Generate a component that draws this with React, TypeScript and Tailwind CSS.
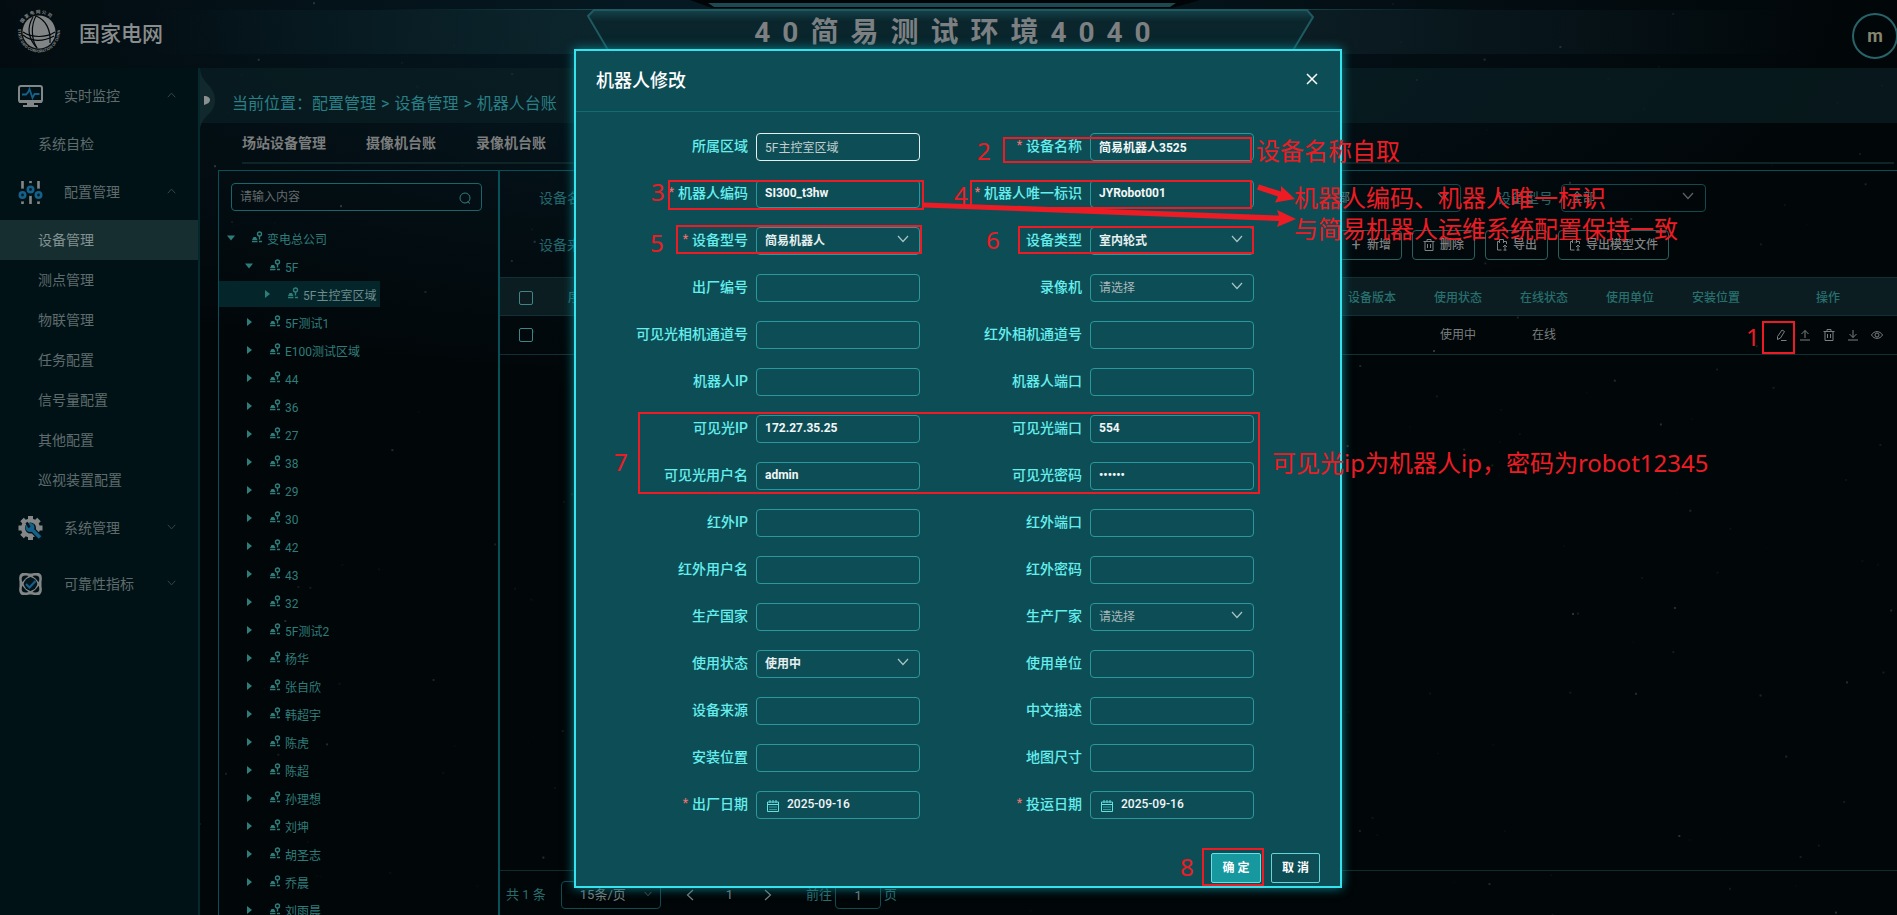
import type { ReactNode } from 'react'

const NAV = [
  { label: '实时监控', icon: 'monitor', open: true, items: ['系统自检'] },
  {
    label: '配置管理',
    icon: 'sliders',
    open: true,
    items: ['设备管理', '测点管理', '物联管理', '任务配置', '信号量配置', '其他配置', '巡视装置配置'],
  },
  { label: '系统管理', icon: 'gear', open: false, items: [] },
  { label: '可靠性指标', icon: 'shield', open: false, items: [] },
]

const ACTIVE_ITEM = '设备管理'

const TREE_LEAVES = [
  '5F测试1', 'E100测试区域', '44', '36', '27', '38', '29', '30', '42', '43', '32', '5F测试2',
  '杨华', '张自欣', '韩超宇', '陈虎', '陈超', '孙理想', '刘坤', '胡圣志', '乔晨', '刘雨晨',
]

interface Field {
  id: string
  label: string
  value?: string
  kind?: 'text' | 'select' | 'date' | 'password'
  required?: boolean
  readOnly?: boolean
}

const FIELDS: Field[] = [
  { id: 'area', label: '所属区域', value: '5F主控室区域', readOnly: true },
  { id: 'name', label: '设备名称', value: '简易机器人3525', required: true },
  { id: 'code', label: '机器人编码', value: 'SI300_t3hw', required: true },
  { id: 'uid', label: '机器人唯一标识', value: 'JYRobot001', required: true },
  { id: 'model', label: '设备型号', value: '简易机器人', kind: 'select', required: true },
  { id: 'type', label: '设备类型', value: '室内轮式', kind: 'select' },
  { id: 'serial', label: '出厂编号' },
  { id: 'recorder', label: '录像机', kind: 'select' },
  { id: 'visChannel', label: '可见光相机通道号' },
  { id: 'irChannel', label: '红外相机通道号' },
  { id: 'robotIp', label: '机器人IP' },
  { id: 'robotPort', label: '机器人端口' },
  { id: 'visIp', label: '可见光IP', value: '172.27.35.25' },
  { id: 'visPort', label: '可见光端口', value: '554' },
  { id: 'visUser', label: '可见光用户名', value: 'admin' },
  { id: 'visPass', label: '可见光密码', value: '123456', kind: 'password' },
  { id: 'irIp', label: '红外IP' },
  { id: 'irPort', label: '红外端口' },
  { id: 'irUser', label: '红外用户名' },
  { id: 'irPass', label: '红外密码' },
  { id: 'country', label: '生产国家' },
  { id: 'vendor', label: '生产厂家', kind: 'select' },
  { id: 'status', label: '使用状态', value: '使用中', kind: 'select' },
  { id: 'unit', label: '使用单位' },
  { id: 'source', label: '设备来源' },
  { id: 'desc', label: '中文描述' },
  { id: 'place', label: '安装位置' },
  { id: 'mapSize', label: '地图尺寸' },
  { id: 'madeAt', label: '出厂日期', value: '2025-09-16', kind: 'date', required: true },
  { id: 'usedAt', label: '投运日期', value: '2025-09-16', kind: 'date', required: true },
]

const MARK_BOXES = [
  'left-[1762px] top-[321px] w-[33px] h-[33px]',
  'left-[1003px] top-[137px] w-[249px] h-[26px]',
  'left-[668px] top-[180px] w-[256px] h-[30px]',
  'left-[970px] top-[180px] w-[282px] h-[29px]',
  'left-[676px] top-[225px] w-[246px] h-[29px]',
  'left-[1018px] top-[226px] w-[236px] h-[28px]',
  'left-[638px] top-[412px] w-[622px] h-[82px]',
  'left-[1202px] top-[848px] w-[62px] h-[38px]',
]

const MARK_TEXTS = [
  { text: '1', pos: 'left-[1746px] top-[321px]' },
  { text: '2', pos: 'left-[977px] top-[135px]' },
  { text: '3', pos: 'left-[651px] top-[176px]' },
  { text: '4', pos: 'left-[954px] top-[179px]' },
  { text: '5', pos: 'left-[650px] top-[227px]' },
  { text: '6', pos: 'left-[986px] top-[224px]' },
  { text: '7', pos: 'left-[614px] top-[446px]' },
  { text: '8', pos: 'left-[1180px] top-[851px]' },
  { text: '设备名称自取', pos: 'left-[1256px] top-[135px]' },
  { text: '机器人编码、机器人唯一标识', pos: 'left-[1294px] top-[182px]' },
  { text: '与简易机器人运维系统配置保持一致', pos: 'left-[1294px] top-[213px]' },
  { text: '可见光ip为机器人ip，密码为robot12345', pos: 'left-[1272px] top-[447px]' },
]

function makeStars(count: number) {
  let seed = 42
  const next = () => {
    seed = (seed * 1103515245 + 12345) % 2147483648
    return seed / 2147483648
  }
  return Array.from({ length: count }, () => ({ x: next() * 100, y: next() * 100, o: next() * next() * 0.4 }))
}

const STARS = makeStars(420)

function Starfield() {
  return (
    <svg className="absolute inset-0 h-full w-full" aria-hidden="true">
      {STARS.map((s, i) => (
        <rect key={i} x={`${s.x}%`} y={`${s.y}%`} width="2" height="2" fill="#8fa5a5" opacity={s.o} />
      ))}
    </svg>
  )
}

function Chevron({ className, up = false }: { className: string; up?: boolean }) {
  return (
    <svg viewBox="0 0 12 8" className={className} fill="none" stroke="currentColor" strokeWidth="1.2">
      <path d={up ? 'M1 7 6 1.5 11 7' : 'M1 1 6 6.5 11 1'} />
    </svg>
  )
}

function Logo() {
  return (
    <svg viewBox="0 0 46 46" className="h-[46px] w-[46px] shrink-0">
      <defs>
        <path id="ring-top" d="M4.500 23a18.500 18.500 0 0 1 37 0" />
        <path id="ring-bottom" d="M2.500 18a21 21 0 1 0 41 0" />
      </defs>
      <circle cx="23" cy="23" r="16.500" fill="#828585" />
      <g fill="none" stroke="#02090c" strokeWidth="1.2">
        <path d="M20 7c-5 9-5 23 1 32" />
        <path d="M17 8c-6 10-5 21 4 31" />
        <path d="M7 23c9 6 23 6 32 0" />
        <path d="M7 26c8 7 20 7 31 1" />
        <path d="M20 7c10 4 15 14 14 27" />
      </g>
      <text fontSize="4.5" fontWeight="700" fill="#828585">
        <textPath href="#ring-top" startOffset="9">国 家 电 网 公 司</textPath>
      </text>
      <text fontSize="4" fontWeight="700" fill="#828585">
        <textPath href="#ring-bottom" startOffset="2">STATE GRID CORPORATION OF CHINA</textPath>
      </text>
    </svg>
  )
}

function NavIcon({ name }: { name: string }) {
  if (name === 'monitor') {
    return (
      <svg viewBox="0 0 25 22" className="h-[22px] w-[25px]" fill="none">
        <rect x="1" y="1" width="23" height="16" rx="2" stroke="#848787" strokeWidth="2" />
        <path d="M1 15h23v2a1 1 0 0 1-1 1H2a1 1 0 0 1-1-1z" fill="#848787" />
        <path d="M9 18h7v2H9zM5 20h15v2H5z" fill="#848787" />
        <path d="M4 9.500h4l2-2 1.500-3.500 3 9 2-4h5" stroke="#14618a" strokeWidth="1.800" />
      </svg>
    )
  }
  if (name === 'sliders') {
    return (
      <svg viewBox="0 0 25 23" className="h-[23px] w-[25px]" fill="none">
        <path d="M4.500 0v23M12.500 0v23M20.500 0v23" stroke="#848787" strokeWidth="2.600" />
        <g fill="#848787" stroke="#011216" strokeWidth="7">
          <circle cx="4.500" cy="14" r="3" />
          <circle cx="12.500" cy="8.500" r="3" />
          <circle cx="20.500" cy="14" r="3" />
        </g>
        <g fill="#041c26" stroke="#14618a" strokeWidth="2.600">
          <circle cx="4.500" cy="14" r="2.700" />
          <circle cx="12.500" cy="8.500" r="2.700" />
          <circle cx="20.500" cy="14" r="2.700" />
        </g>
      </svg>
    )
  }
  if (name === 'gear') {
    return (
      <svg viewBox="0 0 24 24" className="h-6 w-[25px]" fill="none">
        <circle cx="12" cy="12" r="7.500" stroke="#848787" strokeWidth="4" />
        <path
          d="M12 0v4M12 20v4M0 12h4M20 12h4M3.500 3.500l3 3M20.500 3.500l-3 3M3.500 20.500l3-3"
          stroke="#848787"
          strokeWidth="5"
        />
        <path d="M12 12l11 11" stroke="#04161d" strokeWidth="6" />
        <path d="M12 12l9.500 9.500" stroke="#14618a" strokeWidth="3.500" />
        <circle cx="11.500" cy="11.500" r="4.500" fill="#14618a" />
        <path d="M11 11.500 8 6.500" stroke="#04161d" strokeWidth="2.500" />
      </svg>
    )
  }
  return (
    <svg viewBox="0 0 24 22" className="h-[22px] w-[25px]" fill="none" strokeWidth="2">
      <rect x="2" y="1.500" width="20" height="19" rx="5" stroke="#848787" />
      <ellipse cx="12" cy="11" rx="13" ry="6.500" transform="rotate(45 12 11)" stroke="#848787" />
      <ellipse cx="12" cy="11" rx="13" ry="6.500" transform="rotate(-45 12 11)" stroke="#848787" />
      <circle cx="12" cy="11" r="6.500" fill="#04161d" />
      <path d="M7.500 11l3.500 3.500 6-6.500" stroke="#14618a" />
    </svg>
  )
}

function Header() {
  return (
    <header className="relative flex h-[68px] shrink-0 items-start">
      <svg className="absolute inset-x-0 top-0 h-[68px] w-full" viewBox="0 0 1897 68" preserveAspectRatio="none">
        <defs>
          <linearGradient id="band">
            <stop offset="0.08" stopColor="#0f2a31" stopOpacity="0" />
            <stop offset="0.3" stopColor="#0f2a31" stopOpacity="0.7" />
            <stop offset="0.68" stopColor="#0f2228" stopOpacity="0.7" />
            <stop offset="0.95" stopColor="#0f2228" stopOpacity="0" />
          </linearGradient>
          <linearGradient id="line">
            <stop offset="0.2" stopColor="#2a6f75" stopOpacity="0" />
            <stop offset="0.4" stopColor="#2a6f75" />
            <stop offset="0.6" stopColor="#2a6f75" />
            <stop offset="0.78" stopColor="#2a6f75" stopOpacity="0" />
          </linearGradient>
          <linearGradient id="plate" x2="0" y2="1">
            <stop offset="0" stopColor="#15424a" />
            <stop offset="0.2" stopColor="#0a252c" />
            <stop offset="1" stopColor="#0a252c" />
          </linearGradient>
        </defs>
        <rect y="10" width="1897" height="44" fill="url(#band)" />
        <path d="M690 0h510l-28 8H712z" fill="#010507" />
        <path d="M708 3h468l-6 4H714z" fill="#1c4a50" />
        <rect y="9" width="1897" height="1" fill="url(#line)" />
        <path d="M594 10h713l6 7-30 50H618l-30-51z" fill="url(#plate)" stroke="#1f5a61" strokeWidth="2" />
      </svg>
      <a href="#home" className="relative flex items-center gap-[17px] pt-[9px] pl-4">
        <Logo />
        <span className="pt-[3px] text-[21px] leading-8 font-medium text-[#8a8d8d]">国家电网</span>
      </a>
      <h1 className="absolute inset-x-0 top-2 pl-[20px] text-center text-[28px] leading-[50px] font-bold tracking-[12px] text-[#7d8082]">
        40简易测试环境4040
      </h1>
      <button
        type="button"
        className="absolute top-[13px] -right-px size-[46px] rounded-full border-2 border-[#28636a] text-lg font-bold text-[#85866f]"
      >
        m
      </button>
    </header>
  )
}

function Sidebar() {
  return (
    <nav className="w-[200px] shrink-0 border-r-2 border-[#04282c] bg-[#011216] text-sm text-[#5f6c6d]">
      {NAV.map(group => (
        <div key={group.label}>
          <button type="button" className="flex h-14 w-full items-center pr-[22px] pl-[18px] text-left">
            <NavIcon name={group.icon} />
            <span className="ml-[21px] flex-1">{group.label}</span>
            <Chevron className="mb-[3px] h-[6px] w-[9px] text-[#3d4b4d]" up={group.open} />
          </button>
          {group.items.map(item => (
            <a
              key={item}
              href="#nav"
              className={`flex h-10 items-center pl-[38px] ${item === ACTIVE_ITEM ? 'bg-[#162e2f] text-[#829192]' : ''}`}
            >
              {item}
            </a>
          ))}
        </div>
      ))}
    </nav>
  )
}

function RegionIcon() {
  return (
    <svg viewBox="0 0 12 12" className="mb-[3px] size-3 shrink-0" fill="none" stroke="currentColor">
      <circle cx="8.500" cy="3" r="2" strokeWidth="1.400" />
      <path d="M8.500 5v3.500M1 10.500h5.500M8 10.500h3" strokeWidth="1.400" />
      <path d="M1 9l1.500-3H5l1.500 3z" fill="currentColor" stroke="none" />
    </svg>
  )
}

function TreeNode({ label, indent, open = false, selected = false }: {
  label: string
  indent: string
  open?: boolean
  selected?: boolean
}) {
  return (
    <li className="h-7">
      <button
        type="button"
        className={`flex h-[26px] items-center pr-1 ${indent} ${selected ? 'bg-[#04252a] text-[#6f8c8d]' : ''}`}
      >
        <svg viewBox="0 0 8 8" className="mr-4 size-2 shrink-0 text-[#2f7d7b]" fill="currentColor">
          <path d={open ? 'M0 1.500h8l-4 5z' : 'M2 0l5 4-5 4z'} />
        </svg>
        <span className="flex text-[#2f7d7b]"><RegionIcon /></span>
        <span className="ml-1 pt-[3px]">{label}</span>
      </button>
    </li>
  )
}

function RegionTree() {
  return (
    <section className="w-[282px] shrink-0 overflow-hidden border-t border-r-2 border-l border-[#06505a] text-xs text-[#2f7d7b]">
      <div className="mx-3 mt-3 flex h-7 w-[251px] items-center rounded border border-[#1b6469] px-2">
        <input
          type="text"
          aria-label="搜索区域"
          placeholder="请输入内容"
          className="w-full bg-transparent text-[#7f8687] outline-none placeholder:text-[#626b6c]"
        />
        <svg viewBox="0 0 12 12" className="mt-px mr-[2px] size-3 shrink-0" fill="none" stroke="currentColor">
          <circle cx="6" cy="6" r="5" />
          <path d="M8.500 9.500 11 11.500" />
        </svg>
      </div>
      <ul className="mt-[14px]">
        <TreeNode label="变电总公司" indent="pl-2" open />
        <TreeNode label="5F" indent="pl-[26px]" open />
        <TreeNode label="5F主控室区域" indent="pl-[44px]" selected />
        {TREE_LEAVES.map(leaf => (
          <TreeNode key={leaf} label={leaf} indent="pl-[26px]" />
        ))}
      </ul>
    </section>
  )
}

function FilterSelect({ id, label }: { id: string; label: string }) {
  return (
    <div className="flex items-center">
      <label htmlFor={id} className="mr-2 text-sm text-[#23686e]">{label}</label>
      <div className="relative">
        <select
          id={id}
          className="block h-7 w-[145px] appearance-none rounded border border-[#124a50] bg-transparent px-[9px] text-xs text-[#6f7676]"
        >
          <option>全部</option>
        </select>
        <Chevron className="absolute top-2 right-3 h-2 w-3 text-[#5b6566]" />
      </div>
    </div>
  )
}

function ExportIcon() {
  return (
    <svg viewBox="0 0 12 12" className="size-3" fill="none" stroke="currentColor">
      <path d="M4 2.500H1.500v8.500h4M3.500 4V.5h4V4M10.500 5V2.500H8M9 6v5.500M7 8l2-2 2 2M7.500 11h3" />
    </svg>
  )
}

function TrashIcon() {
  return (
    <svg viewBox="0 0 12 12" className="size-3" fill="none" stroke="currentColor">
      <path d="M.5 2.500h11M4 2.500V.5h4v2M2 2.500v9h8v-9M4.500 5v4M7.500 5v4" />
    </svg>
  )
}

function ToolButton({ icon, children }: { icon: ReactNode; children: ReactNode }) {
  return (
    <button
      type="button"
      className="flex h-[30px] items-center gap-[5px] rounded border border-[#28605f] px-[10px] text-xs font-medium text-[#7f8282]"
    >
      {icon}
      {children}
    </button>
  )
}

const ROW_ACTIONS: { label: string; icon: ReactNode }[] = [
  { label: '编辑', icon: <path d="M2.500 10.500v-3L7 1l2.500 1.500L5.500 9zM6 11.500h5.500" /> },
  { label: '上传', icon: <path d="M6 9V1.500M2.500 5 6 1.500 9.500 5M1 11h10" /> },
  { label: '删除', icon: <path d="M.5 2.500h11M4 2.500V.5h4v2M2 2.500v9h8v-9M4.500 5v4M7.500 5v4" /> },
  { label: '下载', icon: <path d="M6 1v7.500M2.500 5 6 8.500 9.500 5M1 11h10" /> },
  { label: '查看', icon: <path d="M.5 6C3 1.500 9 1.500 11.500 6 9 10.500 3 10.500.5 6zM6 4a2 2 0 1 0 0 4 2 2 0 0 0 0-4z" /> },
]

function Checkbox({ label }: { label: string }) {
  return (
    <input
      type="checkbox"
      aria-label={label}
      className="block size-[14px] appearance-none rounded-xs border border-[#3d8587]"
    />
  )
}

function DevicePanel() {
  return (
    <section className="flex min-w-0 flex-1 flex-col border-t border-[#06505a]">
      <div className="flex items-center pt-[13px] pl-[39px]">
        <div className="flex w-[713px] shrink-0">
          <FilterSelect id="f-name" label="设备名称" />
        </div>
        <div className="flex gap-9">
          <FilterSelect id="f-type" label="设备类型" />
          <FilterSelect id="f-model" label="设备型号" />
        </div>
      </div>
      <div className="flex items-center pt-[18px] pl-[39px]">
        <div className="w-[800px] shrink-0">
          <FilterSelect id="f-source" label="设备来源" />
        </div>
        <div className="flex gap-[10px]">
          <ToolButton icon={<span className="w-3 text-center text-base leading-3 font-normal">+</span>}>新增</ToolButton>
          <ToolButton icon={<TrashIcon />}>删除</ToolButton>
          <ToolButton icon={<ExportIcon />}>导出</ToolButton>
          <ToolButton icon={<ExportIcon />}>导出模型文件</ToolButton>
        </div>
      </div>
      <table className="mt-[17px] w-full table-fixed text-center text-xs text-[#7a7f7f]">
        <colgroup>
          <col className="w-[52px]" />
          <col className="w-14" />
          <col />
          <col className="w-[86px]" />
          <col className="w-[86px]" />
          <col className="w-[86px]" />
          <col className="w-[86px]" />
          <col className="w-[86px]" />
          <col className="w-[138px]" />
        </colgroup>
        <thead>
          <tr className="h-[38px] border-y border-[#123034] bg-[#0b1d21] text-[#28706f]">
            <th className="pt-[3px] pl-[19px]"><Checkbox label="全选" /></th>
            <th className="pt-[3px] font-medium">序号</th>
            <th />
            <th className="pt-[3px] font-medium">设备版本</th>
            <th className="pt-[3px] font-medium">使用状态</th>
            <th className="pt-[3px] font-medium">在线状态</th>
            <th className="pt-[3px] font-medium">使用单位</th>
            <th className="pt-[3px] font-medium">安装位置</th>
            <th className="pt-[3px] font-medium">操作</th>
          </tr>
        </thead>
        <tbody>
          <tr className="h-[39px] border-b border-[#123034]">
            <td className="pl-[19px]"><Checkbox label="选择设备" /></td>
            <td />
            <td />
            <td />
            <td>使用中</td>
            <td>在线</td>
            <td />
            <td />
            <td>
              <div className="flex justify-center gap-3 pl-px">
                {ROW_ACTIONS.map(action => (
                  <button key={action.label} type="button" aria-label={action.label}>
                    <svg viewBox="0 0 12 12" className="size-3" fill="none" stroke="currentColor">{action.icon}</svg>
                  </button>
                ))}
              </div>
            </td>
          </tr>
        </tbody>
      </table>
      <div className="mt-auto flex h-[45px] items-start border-t border-[#0c2c30] pt-[10px] pl-[6px] text-sm text-[#2a6d6e]">
        <span className="flex h-7 items-center text-[13px]">共 1 条</span>
        <div className="relative ml-[15px]">
          <select
            aria-label="每页条数"
            className="block h-7 w-[100px] appearance-none rounded border border-[#124a50] bg-transparent pl-[18px] text-[13px] text-[#7a7f7f]"
          >
            <option>15条/页</option>
          </select>
          <Chevron className="absolute top-[10px] right-[9px] h-[6px] w-2 text-[#5b6566]" />
        </div>
        <button type="button" aria-label="上一页" className="ml-[23px] flex h-7 items-center text-[#7a7f7f]">
          <Chevron className="h-2 w-3 rotate-90" />
        </button>
        <span className="ml-[30px] flex h-7 items-center text-[13px] text-[#7a7f7f]">1</span>
        <button type="button" aria-label="下一页" className="ml-[29px] flex h-7 items-center text-[#7a7f7f]">
          <Chevron className="h-2 w-3 -rotate-90" />
        </button>
        <label htmlFor="page" className="ml-8 flex h-7 items-center text-[13px]">前往</label>
        <input
          id="page"
          type="text"
          defaultValue="1"
          className="mx-[3px] h-7 w-[46px] rounded border border-[#124a50] bg-transparent text-center text-[13px] text-[#7a7f7f]"
        />
        <span className="flex h-7 items-center text-[13px]">页</span>
      </div>
    </section>
  )
}

function FieldControl({ field }: { field: Field }) {
  const base = 'block h-7 w-[164px] rounded border bg-transparent text-xs outline-none'
  if (field.kind === 'select') {
    return (
      <div className="relative">
        <select
          id={field.id}
          className={`${base} appearance-none border-[#2a989c] px-2 ${field.value ? 'font-bold text-[#e6eeee]' : 'text-[#a9b8ba]'}`}
        >
          <option>{field.value ?? '请选择'}</option>
        </select>
        <Chevron className="absolute top-2 right-[11px] h-2 w-3 text-[#a9c4c6]" />
      </div>
    )
  }
  if (field.kind === 'date') {
    return (
      <div className="relative">
        <input
          id={field.id}
          type="text"
          defaultValue={field.value}
          className={`${base} border-[#2a989c] pb-[2px] pl-[30px] font-medium text-[#f2f6f6]`}
        />
        <svg viewBox="0 0 12 12" className="absolute top-[9px] left-[11px] size-3" fill="none" stroke="#5fe3e3">
          <path d="M.5 2h11v9.500H.5zM.5 4.500h11M3 0v3M6 0v3M9 0v3" />
          <path d="M2.500 7h7M2.500 9.500h7" strokeDasharray="1 1" />
        </svg>
      </div>
    )
  }
  return (
    <input
      id={field.id}
      type={field.kind === 'password' ? 'password' : 'text'}
      defaultValue={field.value}
      readOnly={field.readOnly}
      className={`${base} px-2 pb-[2px] ${field.readOnly ? 'border-[#e3eeee] text-[#c3cfd0]' : 'border-[#2a989c] font-bold text-[#f2f6f6]'}`}
    />
  )
}

function RobotDialog() {
  return (
    <div
      role="dialog"
      aria-labelledby="dialog-title"
      className="relative flex h-[839px] w-[768px] flex-col border-2 border-[#35e3ee] bg-[#0d4e56] shadow-[0_0_10px_#0b8490]"
    >
      <div className="flex h-[61px] shrink-0 items-center justify-between border-b border-[#136c75] pr-[22px] pl-5">
        <h2 id="dialog-title" className="text-lg font-medium text-white">机器人修改</h2>
        <button type="button" aria-label="关闭" className="mb-1 text-white">
          <svg viewBox="0 0 12 12" className="size-3" fill="none" stroke="currentColor" strokeWidth="1.500">
            <path d="M1 1l10 10M11 1 1 11" />
          </svg>
        </button>
      </div>
      <form className="grid grid-cols-[344px_334px] gap-y-[19px] pt-[21px]">
        {FIELDS.map(field => (
          <div key={field.id} className="flex h-7 gap-2">
            <label htmlFor={field.id} className="flex-1 text-right text-sm leading-[26px] font-medium text-[#66eeee]">
              {field.required && <span className="mr-1 align-[2px] text-xs text-[#e8736f]">*</span>}
              {field.label}
            </label>
            <FieldControl field={field} />
          </div>
        ))}
      </form>
      <div className="mt-auto flex justify-end gap-[10px] pr-5 pb-[3px] text-xs font-bold text-white">
        <button type="button" className="h-[30px] w-[50px] rounded-xs border border-[#62e3e8] bg-[#17989f]">确 定</button>
        <button type="button" className="h-[30px] w-[49px] rounded-xs border border-[#62d5da]">取 消</button>
      </div>
    </div>
  )
}

function Marks() {
  return (
    <div className="pointer-events-none absolute inset-0 font-['Noto_Sans','Noto_Sans_CJK_SC',sans-serif] text-2xl leading-8 text-[#ed1c24]">
      {MARK_BOXES.map(box => (
        <div key={box} className={`absolute border-2 border-[#ed1c24] ${box}`} />
      ))}
      <svg className="absolute top-0 left-0 h-[300px] w-[1400px]" fill="#ed1c24">
        <path d="M924 202.500 1279 215.500 1277 210 1296 219 1277 227 1279 221 924 207.500z" />
        <path d="M1259 184.500 1281 191.500 1281 186 1295 199 1275 202.500 1278 196.500 1257 189.500z" />
      </svg>
      {MARK_TEXTS.map(mark => (
        <span key={mark.pos} className={`absolute whitespace-nowrap ${mark.pos}`}>{mark.text}</span>
      ))}
    </div>
  )
}

export default function App() {
  return (
    <div className="relative h-screen overflow-hidden bg-[#010608] font-['Roboto','Noto_Sans_CJK_SC',sans-serif]">
      <div className="absolute inset-x-0 top-0 h-[400px] bg-[radial-gradient(ellipse_at_40%_0%,#061a24_0%,#010608_70%)]" />
      <Starfield />
      <div className="relative flex h-full flex-col">
        <Header />
        <div className="flex min-h-0 flex-1">
          <Sidebar />
          <main className="relative flex min-w-0 flex-1 flex-col">
            <svg viewBox="0 0 16 62" className="absolute top-0 left-0 h-[62px] w-4">
              <path d="M0 0c1 16 15 17 15 32S1 47 0 62z" fill="#11292d" />
              <path d="M4 28c4 0 6 2 6 4s-2 4-6 5z" fill="#8a8f8f" />
            </svg>
            <div className="flex h-[55px] shrink-0 items-center gap-[5px] bg-[#0a1f24]/70 pt-4 pl-8 text-base text-[#2a7f86]">
              <span>当前位置：配置管理</span>
              <span>&gt;</span>
              <span>设备管理</span>
              <span>&gt;</span>
              <span>机器人台账</span>
            </div>
            <div className="mr-[3px] ml-[42px] flex h-[41px] shrink-0 items-center gap-10 border-b-2 border-[#0e2427] text-sm font-bold text-[#7b7d7d]">
              <a href="#station">场站设备管理</a>
              <a href="#camera">摄像机台账</a>
              <a href="#recorder">录像机台账</a>
            </div>
            <div className="mt-[6px] ml-[18px] flex min-h-0 flex-1">
              <RegionTree />
              <DevicePanel />
            </div>
          </main>
        </div>
      </div>
      <div className="absolute inset-0 flex items-start justify-center pt-[49px] pl-[19px]">
        <RobotDialog />
      </div>
      <Marks />
    </div>
  )
}
